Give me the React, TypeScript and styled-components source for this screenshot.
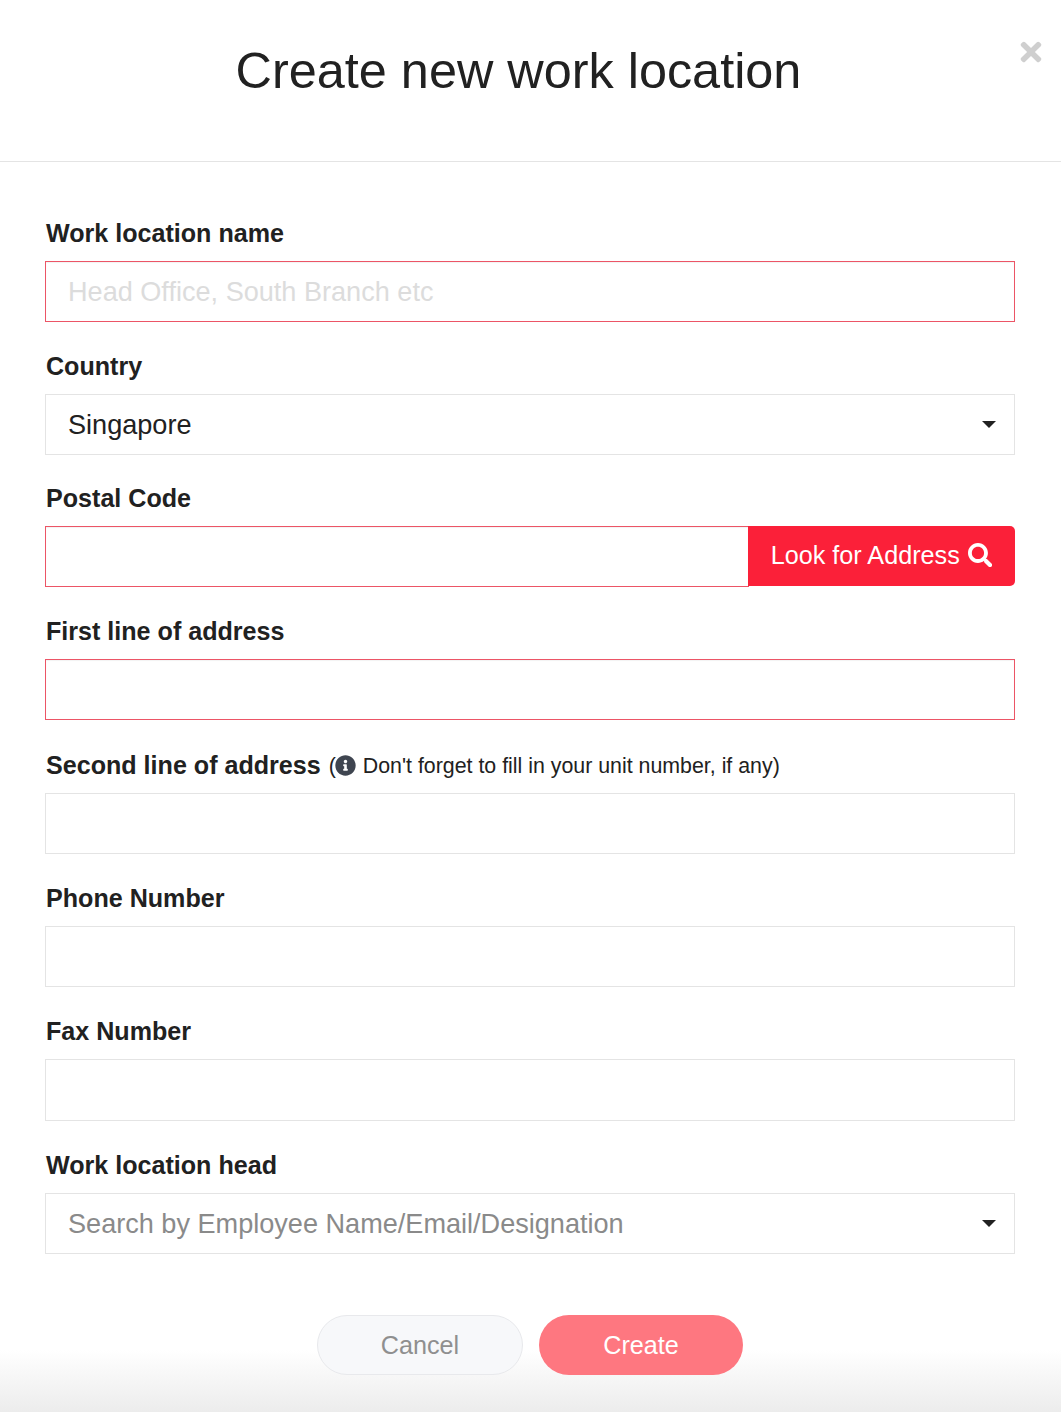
import React from 'react';
import styled, { createGlobalStyle } from 'styled-components';
import { FaInfoCircle, FaSearch, FaTimes } from 'react-icons/fa';

const GlobalStyle = createGlobalStyle`
  html, body {
    margin: 0;
    padding: 0;
    background: #fff;
    font-family: "Liberation Sans", Arial, sans-serif;
    color: #212121;
  }
  * {
    box-sizing: border-box;
  }
`;

const Modal = styled.div`
  width: 1061px;
  height: 1412px;
  overflow: hidden;
  position: relative;
  background: #fff;
`;

const Header = styled.header`
  height: 162px;
  border-bottom: 1px solid #e4e4e4;
  padding: 40px 24px 0 0;
  text-align: center;
  position: relative;
`;

const Title = styled.h1`
  margin: 0;
  font-size: 50.4px;
  line-height: 62px;
  font-weight: 400;
  color: #212121;
`;

const CloseButton = styled.button`
  position: absolute;
  top: 40px;
  right: 18px;
  width: 24px;
  height: 24px;
  padding: 0;
  border: 0;
  background: none;
  color: #cfcfcf;
  font-size: 30px;
  display: flex;
  align-items: center;
  justify-content: center;
`;

const Form = styled.form`
  padding: 55px 46px 0 45px;
  display: flex;
  flex-direction: column;
`;

const Field = styled.div<{ $height?: number }>`
  height: ${p => p.$height ?? 133}px;
`;

const LabelRow = styled.div`
  height: 44px;
  display: flex;
  align-items: flex-start;
`;

const Label = styled.label`
  padding-left: 1px;
  font-size: 25.1px;
  line-height: 32px;
  font-weight: 700;
  color: #212121;
`;

const Hint = styled.span`
  display: inline-flex;
  align-items: center;
  margin: 1px 0 0 8px;
  font-size: 21.35px;
  line-height: 32px;
  color: #212121;

  svg {
    color: #3f4550;
    font-size: 21px;
    margin: -2px 7px 0 -1px;
  }
`;

const TextInput = styled.input<{ $error?: boolean; $height?: number }>`
  display: block;
  width: 100%;
  height: ${p => p.$height ?? 61}px;
  padding: 0 22px;
  border: 1px solid ${p => (p.$error ? '#ec5566' : '#e4e4e4')};
  border-radius: 0;
  outline: none;
  background: #fff;
  box-shadow: ${p => (p.$error ? 'inset 0 1px 1px rgba(0, 0, 0, 0.05)' : 'none')};
  font-family: inherit;
  font-size: 27.1px;
  color: #212121;

  &::placeholder {
    color: #dcdcdc;
    opacity: 1;
  }
`;

const InputGroup = styled.div`
  display: flex;
`;

const LookupButton = styled.button`
  flex: 0 0 267px;
  height: 60px;
  margin-left: -1px;
  position: relative;
  border: 0;
  border-radius: 0 5px 5px 0;
  background: #fb2039;
  color: #fff;
  font-family: inherit;
  font-size: 25.2px;
  display: flex;
  align-items: center;
  justify-content: center;
  gap: 8px;
  padding: 0 0 2px;

  svg {
    font-size: 24.5px;
  }
`;

const SelectBox = styled.div<{ $placeholder?: boolean }>`
  height: 61px;
  padding: 0 22px;
  border: 1px solid #e4e4e4;
  display: flex;
  align-items: center;
  justify-content: space-between;
  font-size: 27.1px;
  color: ${p => (p.$placeholder ? '#8a8a8a' : '#212121')};
`;

const Caret = styled.span`
  width: 0;
  height: 0;
  margin-right: -4px;
  border-left: 7px solid transparent;
  border-right: 7px solid transparent;
  border-top: 7px solid #212121;
`;

const Footer = styled.div`
  position: relative;
  z-index: 1;
  display: flex;
  justify-content: center;
  gap: 16px;
  margin-top: 33px;
`;

const PillButton = styled.button<{ $primary?: boolean }>`
  height: 60px;
  width: ${p => (p.$primary ? '204px' : '206px')};
  border-radius: 30px;
  border: ${p => (p.$primary ? '0' : '1px solid #e8e9ec')};
  background: ${p => (p.$primary ? '#fe7780' : '#f7f8fa')};
  color: ${p => (p.$primary ? '#fff' : '#8f8f8f')};
  font-family: inherit;
  font-size: 25.2px;
  padding: 0;
`;

const BottomFade = styled.div`
  position: absolute;
  left: 0;
  right: 0;
  bottom: 0;
  height: 62px;
  background: linear-gradient(to bottom, rgba(236, 236, 236, 0), rgba(236, 236, 236, 1));
  pointer-events: none;
`;

const App: React.FC = () => {
  return (
    <Modal>
      <GlobalStyle />
      <Header>
        <Title>Create new work location</Title>
        <CloseButton type="button" aria-label="Close">
          <FaTimes />
        </CloseButton>
      </Header>
      <Form>
        <Field>
          <LabelRow>
            <Label>Work location name</Label>
          </LabelRow>
          <TextInput $error placeholder="Head Office, South Branch etc" />
        </Field>
        <Field $height={132}>
          <LabelRow>
            <Label>Country</Label>
          </LabelRow>
          <SelectBox>
            Singapore
            <Caret />
          </SelectBox>
        </Field>
        <Field>
          <LabelRow>
            <Label>Postal Code</Label>
          </LabelRow>
          <InputGroup>
            <TextInput $error />
            <LookupButton type="button">
              Look for Address
              <FaSearch />
            </LookupButton>
          </InputGroup>
        </Field>
        <Field $height={134}>
          <LabelRow>
            <Label>First line of address</Label>
          </LabelRow>
          <TextInput $error />
        </Field>
        <Field>
          <LabelRow>
            <Label>Second line of address</Label>
            <Hint>
              (<FaInfoCircle />
              Don't forget to fill in your unit number, if any)
            </Hint>
          </LabelRow>
          <TextInput />
        </Field>
        <Field>
          <LabelRow>
            <Label>Phone Number</Label>
          </LabelRow>
          <TextInput />
        </Field>
        <Field $height={134}>
          <LabelRow>
            <Label>Fax Number</Label>
          </LabelRow>
          <TextInput $height={62} />
        </Field>
        <Field>
          <LabelRow>
            <Label>Work location head</Label>
          </LabelRow>
          <SelectBox $placeholder>
            Search by Employee Name/Email/Designation
            <Caret />
          </SelectBox>
        </Field>
        <Footer>
          <PillButton type="button">Cancel</PillButton>
          <PillButton type="button" $primary>
            Create
          </PillButton>
        </Footer>
      </Form>
      <BottomFade />
    </Modal>
  );
};

export default App;
